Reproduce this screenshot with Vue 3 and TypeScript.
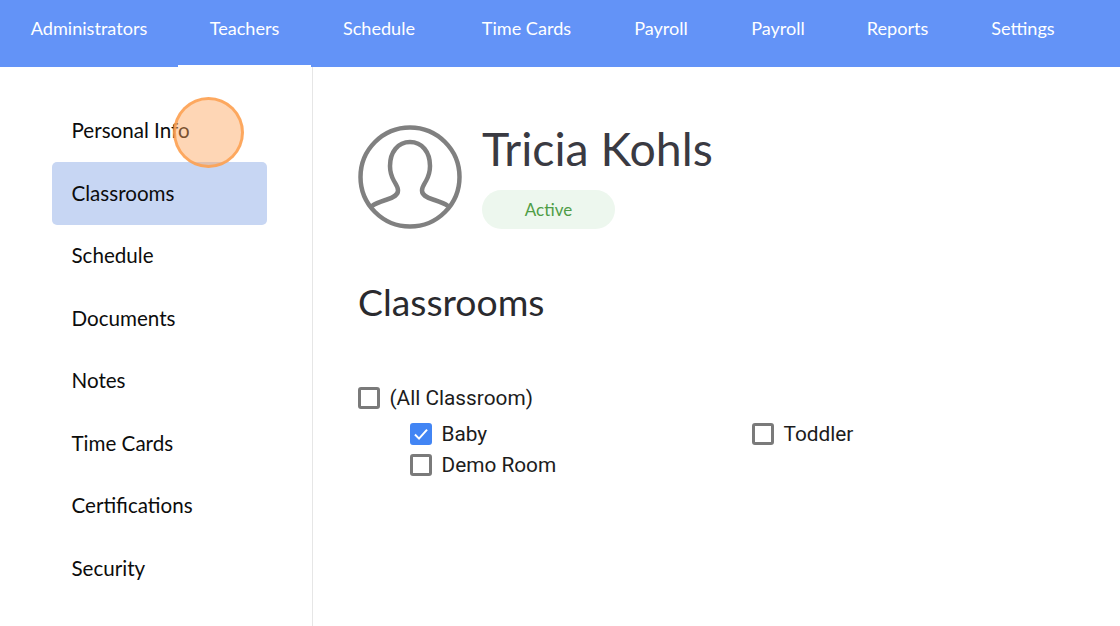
<template>
  <div class="page">
    <nav class="topnav">
      <a
        v-for="(item, i) in navItems"
        :key="i"
        class="nav-item"
        :class="{ active: item === 'Teachers' }"
      >{{ item }}</a>
    </nav>

    <div class="body">
      <aside class="sidebar">
        <a
          v-for="item in sideItems"
          :key="item"
          class="side-item"
          :class="{ selected: item === 'Classrooms' }"
        >{{ item }}</a>
      </aside>

      <main class="content">
        <div class="profile">
          <svg class="avatar" viewBox="0 0 104 104" fill="none" stroke="#808080" stroke-width="4.500">
            <circle cx="52" cy="52" r="49.500" />
            <path d="M14 81c4-3 9-4.500 15-6.500 7-2.300 11-4.500 11-9 0-3.500-2-6-4-9.500-2.500-4.500-4-9-4-15 0-14 8-24 20-24s20 10 20 24c0 6-1.500 10.500-4 15-2 3.500-4 6-4 9.500 0 4.500 4 6.700 11 9 6 2 11 3.500 15 6.500" />
          </svg>
          <div class="who">
            <h1 class="name">Tricia Kohls</h1>
            <span class="badge">Active</span>
          </div>
        </div>

        <h2 class="title">Classrooms</h2>

        <div class="check-all">
          <span class="box"></span>
          <span>(All Classroom)</span>
        </div>
        <div class="rooms">
          <div v-for="room in rooms" :key="room.name" class="room">
            <span class="box" :class="{ checked: room.checked }">
              <svg v-if="room.checked" viewBox="0 0 20 20" fill="none" stroke="#fff" stroke-width="1.800">
                <path d="M4.500 10.500l3.700 3.700 7.300-8.200" />
              </svg>
            </span>
            <span>{{ room.name }}</span>
          </div>
        </div>
      </main>
    </div>

    <div class="click-spot"></div>
  </div>
</template>

<script setup lang="ts">
const navItems: string[] = [
  'Administrators',
  'Teachers',
  'Schedule',
  'Time Cards',
  'Payroll',
  'Payroll',
  'Reports',
  'Settings'
]

const sideItems: string[] = [
  'Personal Info',
  'Classrooms',
  'Schedule',
  'Documents',
  'Notes',
  'Time Cards',
  'Certifications',
  'Security'
]

const rooms = [
  { name: 'Baby', checked: true },
  { name: 'Toddler', checked: false },
  { name: 'Demo Room', checked: false }
]
</script>

<style>
html,
body {
  margin: 0;
  background: #fff;
  overflow: hidden;
}
</style>

<style scoped>
.page {
  position: relative;
  width: 1120px;
  height: 626px;
  overflow: hidden;
  font-family: Lato, "Open Sans", sans-serif;
  color: #111;
}

.topnav {
  display: grid;
  grid-template-columns: 178px 133px 136px 159px 110px 124px 115px 136px;
  height: 67px;
  background: #6393f7;
}

.nav-item {
  height: 65px;
  padding-bottom: 9px;
  display: flex;
  align-items: center;
  justify-content: center;
  box-sizing: border-box;
  color: #fff;
  font-size: 18.100px;
}

.nav-item.active {
  height: 67px;
  border-bottom: 2px solid #fff;
}

.body {
  display: flex;
  height: 559px;
}

.sidebar {
  width: 313px;
  box-sizing: border-box;
  border-right: 1px solid #e6e6e6;
  padding: 32.500px 45px 0 52px;
  display: flex;
  flex-direction: column;
}

.side-item {
  height: 62.500px;
  flex: none;
  box-sizing: border-box;
  display: flex;
  align-items: center;
  padding: 0 0 1px 19.500px;
  border-radius: 5px;
  font-size: 20.600px;
  color: #0c0c0c;
}

.side-item.selected {
  background: #c7d6f3;
}

.content {
  flex: 1;
  padding: 58px 0 0 45px;
}

.profile {
  display: flex;
  gap: 20px;
}

.avatar {
  width: 104px;
  height: 104px;
  flex: none;
}

.name {
  margin: 0;
  font-size: 46.400px;
  line-height: 46px;
  font-weight: 400;
  color: #3a3a42;
}

.who {
  display: flex;
  flex-direction: column;
  align-items: flex-start;
}

.badge {
  margin-top: 19px;
  width: 133px;
  height: 39px;
  border-radius: 20px;
  background: #edf7ee;
  color: #4f9d46;
  font-size: 17px;
  display: flex;
  align-items: center;
  justify-content: center;
}

.title {
  margin: 52px 0 0;
  font-size: 37.300px;
  line-height: 42px;
  font-weight: 400;
  color: #2a2a2e;
}

.check-all,
.room {
  display: flex;
  align-items: center;
  gap: 9.500px;
  font-family: Roboto, sans-serif;
  font-size: 20.800px;
  color: #1c1c1c;
}

.check-all {
  margin-top: 59px;
  height: 31px;
}

.rooms {
  display: grid;
  grid-template-columns: 342px 1fr;
  grid-auto-rows: 31px;
  margin: 5px 0 0 52px;
}

.box {
  width: 22px;
  height: 22px;
  flex: none;
  box-sizing: border-box;
  border: 3px solid #7a7a7a;
  border-radius: 3px;
  background: #fff;
}

.box.checked {
  background: #4285f4;
  border-color: #4285f4;
  position: relative;
}

.box.checked svg {
  position: absolute;
  inset: -3px;
  width: 22px;
  height: 22px;
}

.click-spot {
  position: absolute;
  left: 173px;
  top: 97px;
  width: 71px;
  height: 71px;
  box-sizing: border-box;
  border-radius: 50%;
  background: rgba(253, 165, 90, 0.45);
  border: 3px solid rgba(253, 160, 80, 0.85);
}
</style>
